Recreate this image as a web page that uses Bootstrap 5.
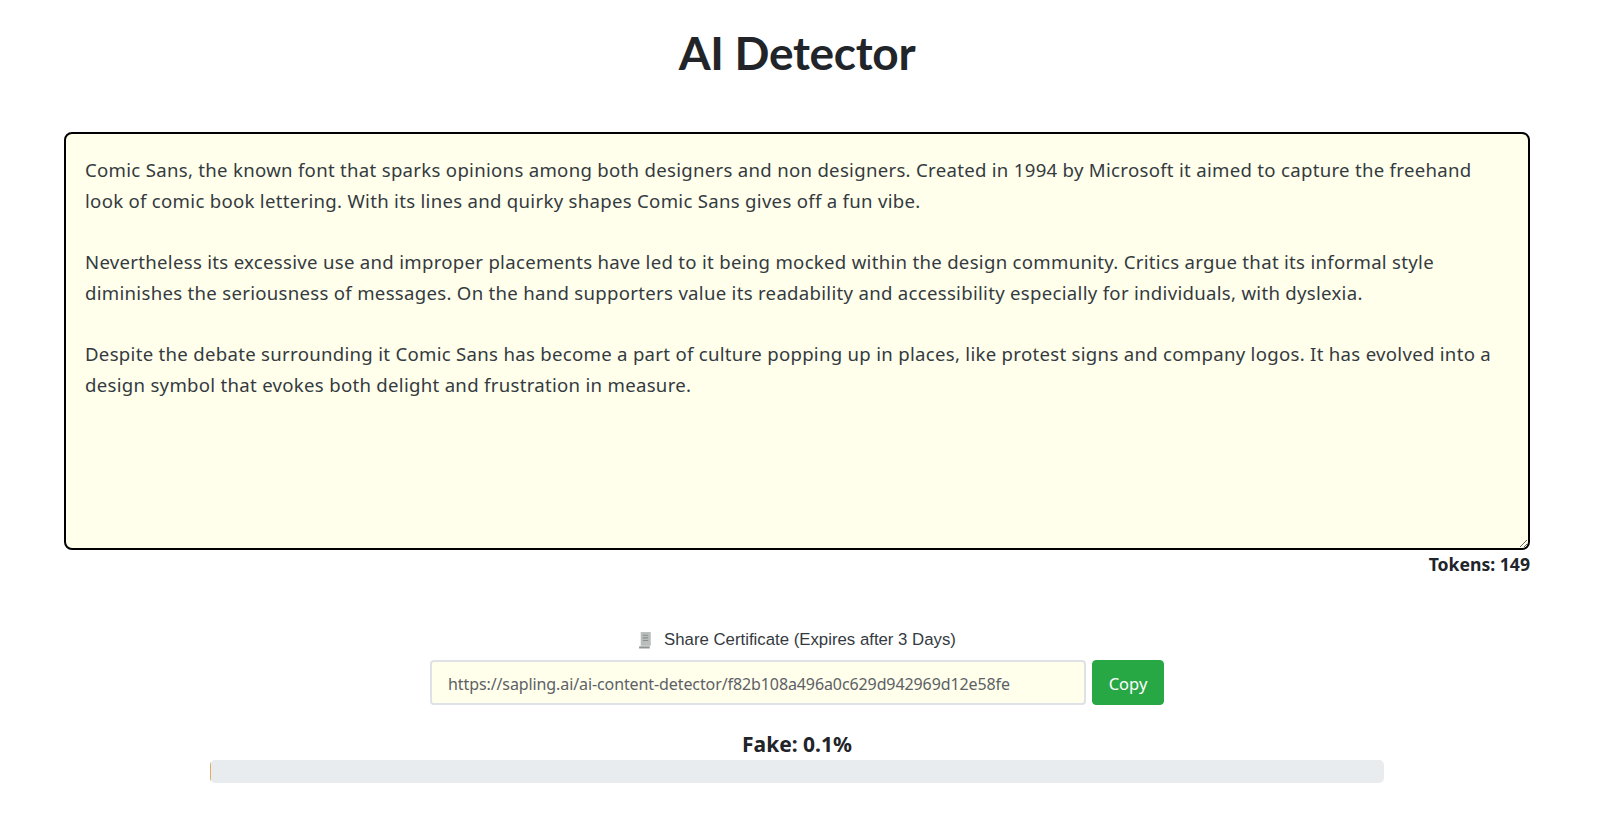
<!doctype html>
<html lang="en"><head><meta charset="utf-8"><title>AI Detector</title>
<link href="https://cdn.jsdelivr.net/npm/bootstrap@5.3.0/dist/css/bootstrap.min.css" rel="stylesheet">
<style>
body{font-family:"Noto Sans",sans-serif;color:#212529;background:#fff}
.page-wrap{padding:0 70px 0 64px}
.page-title{font-family:"Lato",sans-serif;font-weight:700;font-size:46px;line-height:58px;padding-top:24px;margin-bottom:50px;color:#212529;letter-spacing:-.3px}
.text-input{display:block;width:100%;height:418px;background:#ffffec;border:2.5px solid #000;border-radius:8px;padding:21px 18px 19px 19px;font-size:18.6px;line-height:30.72px;color:#343a40;font-family:"Noto Sans",sans-serif;letter-spacing:.29px;box-shadow:none}
.tokens{font-size:17.6px;font-weight:700;line-height:24px;padding-top:2px;margin-bottom:52px}
.share-label{font-family:"Liberation Sans",sans-serif;font-size:16.8px;line-height:24px;margin-bottom:8px;color:#343a40;gap:10px}
.share-row{width:734px}
.share-input{width:656px;height:45px;background:#ffffec;border:2px solid #dee2e6;border-radius:4px;padding:2px 16px 0;font-size:16px;color:#5c6166;letter-spacing:-.1px}
.copy-btn{width:72px;height:45px;background:#28a745;border-color:#28a745;color:#fff;font-size:16.5px;padding:3px 0 0;border-radius:4px}
.fake-label{font-size:21px;font-weight:700;line-height:30px;margin-top:24px;margin-bottom:1px}
.fake-bar{width:1174px;height:23px;background:#e9ecef;border-radius:5px}
.fake-fill{background:#e0ad5e}
</style></head>
<body>
<main class="page-wrap">
<h1 class="page-title text-center">AI Detector</h1>
<textarea class="text-input form-control" spellcheck="false">Comic Sans, the known font that sparks opinions among both designers and non designers. Created in 1994 by Microsoft it aimed to capture the freehand look of comic book lettering. With its lines and quirky shapes Comic Sans gives off a fun vibe.

Nevertheless its excessive use and improper placements have led to it being mocked within the design community. Critics argue that its informal style diminishes the seriousness of messages. On the hand supporters value its readability and accessibility especially for individuals, with dyslexia.

Despite the debate surrounding it Comic Sans has become a part of culture popping up in places, like protest signs and company logos. It has evolved into a design symbol that evokes both delight and frustration in measure.</textarea>
<div class="tokens text-end">Tokens: 149</div>
<div class="share-label text-center d-flex justify-content-center align-items-center">
<svg width="16" height="18" viewBox="0 0 14 17" aria-hidden="true"><path d="M2 1h9.500v13H2z" fill="#b9bdbb"/><path d="M0.500 14.500h10v2h-10z" fill="#8f9492"/><path d="M4 4h5M4 6.500h5M4 9h5" stroke="#8a8f8d"/></svg>
<span>Share Certificate (Expires after 3 Days)</span></div>
<div class="share-row d-flex mx-auto justify-content-between">
<input class="share-input form-control" value="https://sapling.ai/ai-content-detector/f82b108a496a0c629d942969d12e58fe">
<button class="copy-btn btn" type="button">Copy</button>
</div>
<div class="fake-label text-center">Fake: 0.1%</div>
<div class="fake-bar progress mx-auto"><div class="fake-fill progress-bar" style="width:0.1%"></div></div>
</main>
</body></html>
